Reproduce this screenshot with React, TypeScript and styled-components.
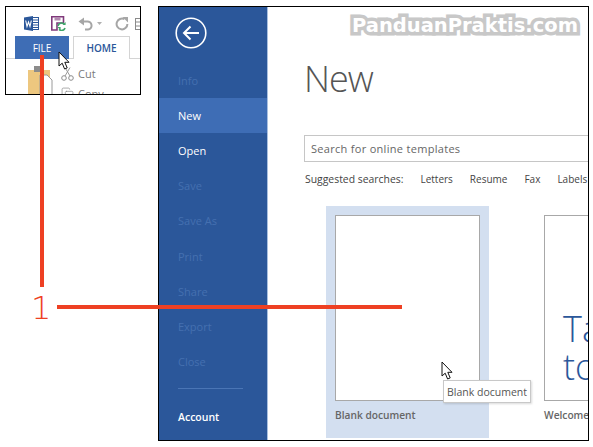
import React from 'react';
import styled, { createGlobalStyle } from 'styled-components';
import { Copy } from 'lucide-react';

const UI_FONT = '"Open Sans", "Noto Sans", sans-serif';

const GlobalStyle = createGlobalStyle`
  html, body {
    margin: 0;
    background: #ffffff;
  }
  #root {
    width: 593px;
    height: 447px;
  }
`;

function Arrow({ className }: { className?: string }) {
  return (
    <svg className={className} width='13' height='20' viewBox='0 0 13 20'>
      <path
        d='M1 1 L1 15 L4.2 12.2 L6.6 18 L9.2 16.9 L6.8 11.3 L11 11.3 Z'
        fill='#fff'
        stroke='#111'
        strokeWidth='1'
        strokeLinejoin='miter'
      />
    </svg>
  );
}

function WordIcon() {
  return (
    <svg width='15' height='15' viewBox='0 0 15 15'>
      <rect x='7' y='1.5' width='7.5' height='12' fill='#fff' stroke='#2b579a' />
      <path d='M9 4h5M9 6.5h5M9 9h5M9 11.5h5' stroke='#2b579a' />
      <path d='M0 1.6 L9 0 V15 L0 13.4 Z' fill='#2b579a' />
      <path d='M1.7 4.5 L3 10.5 L4.5 6 L6 10.5 L7.3 4.5' fill='none' stroke='#fff' strokeWidth='1.1' />
    </svg>
  );
}

function SaveIcon() {
  return (
    <svg width='15' height='15' viewBox='0 0 15 15'>
      <path d='M0.8 0.8 H12.5 V7 H6 V14 H0.8 Z' fill='#fff' stroke='#80397b' strokeWidth='1.6' />
      <rect x='3.5' y='1' width='6' height='3.5' fill='#b28ab0' />
      <path d='M7 10 A3.6 3.6 0 0 1 13 8' fill='none' stroke='#3fa66a' strokeWidth='1.7' />
      <path d='M14 12 A3.6 3.6 0 0 1 8 13.4' fill='none' stroke='#3fa66a' strokeWidth='1.7' />
      <path d='M11.5 9 H14.6 V6 Z M6.4 11 H9.6 V14.2 Z' fill='#3fa66a' />
    </svg>
  );
}

function UndoIcon() {
  return (
    <svg width='15' height='14' viewBox='0 0 15 14'>
      <path d='M2.5 4.5 H9 A4 4 0 0 1 10 12.6 H7' fill='none' stroke='#a6a6a6' strokeWidth='2' />
      <path d='M6 0.5 V8.5 L0.5 4.5 Z' fill='#a6a6a6' />
    </svg>
  );
}

function CaretIcon() {
  return (
    <svg width='5' height='3' viewBox='0 0 5 3'>
      <path d='M0 0 H5 L2.5 3 Z' fill='#b0b0b0' />
    </svg>
  );
}

function RedoIcon() {
  return (
    <svg width='14' height='14' viewBox='0 0 14 14'>
      <path d='M9.5 2.2 A5.4 5.4 0 1 0 12.4 7' fill='none' stroke='#a6a6a6' strokeWidth='2' />
      <path d='M7.5 0 H13 V5.5 Z' fill='#a6a6a6' />
    </svg>
  );
}

function ExtraIcon() {
  return (
    <svg width='6' height='12' viewBox='0 0 6 12'>
      <rect x='0.5' y='0.5' width='9' height='11' fill='none' stroke='#8a8a8a' />
      <path d='M0 4h6M0 8h6' stroke='#8a8a8a' />
    </svg>
  );
}

function ScissorsIcon() {
  return (
    <svg width='13' height='14' viewBox='0 0 13 14'>
      <circle cx='3' cy='11' r='2.3' fill='none' stroke='#8c8c8c' />
      <circle cx='10' cy='11' r='2.3' fill='none' stroke='#8c8c8c' />
      <path d='M4 9 L9 0.5 M9 9 L4 0.5' fill='none' stroke='#9a9a9a' />
    </svg>
  );
}

function PasteIcon() {
  return (
    <svg width='27' height='30' viewBox='0 0 27 30'>
      <rect x='1' y='4' width='22' height='26' fill='#edc77f' />
      <rect x='7' y='0' width='10' height='6' fill='#8c8c8c' />
      <path d='M13 9 H20 L25 14 V30 H13 Z' fill='#fff' stroke='#9a9a9a' />
    </svg>
  );
}

function BackIcon() {
  return (
    <svg width='32' height='32' viewBox='0 0 32 32'>
      <circle cx='16' cy='16' r='14.8' fill='none' stroke='#fff' strokeWidth='1.6' />
      <path d='M9 16 H24 M15.5 9.5 L9 16 L15.5 22.5' fill='none' stroke='#fff' strokeWidth='2' />
    </svg>
  );
}

const sideItems = [
  { label: 'Info', disabled: true },
  { label: 'New', active: true },
  { label: 'Open' },
  { label: 'Save', disabled: true },
  { label: 'Save As', disabled: true },
  { label: 'Print', disabled: true },
  { label: 'Share', disabled: true },
  { label: 'Export', disabled: true },
  { label: 'Close', disabled: true },
];

const suggestions = ['Letters', 'Resume', 'Fax', 'Labels'];

function App() {
  return (
    <Canvas>
      <GlobalStyle />

      <RibbonWindow>
        <QuickAccess>
          <WordIcon />
          <SaveIcon />
          <UndoGroup>
            <UndoIcon />
            <CaretIcon />
          </UndoGroup>
          <RedoIcon />
          <ExtraIcon />
        </QuickAccess>
        <Tabs>
          <FileTab>FILE</FileTab>
          <HomeTab>HOME</HomeTab>
        </Tabs>
        <Ribbon>
          <PasteIcon />
          <Commands>
            <Command>
              <ScissorsIcon />
              Cut
            </Command>
            <Command>
              <Copy size={13} strokeWidth={1.3} color='#8a8a8a' />
              Copy
            </Command>
          </Commands>
        </Ribbon>
      </RibbonWindow>

      <BackstageWindow>
        <Sidebar>
          <BackSlot>
            <BackIcon />
          </BackSlot>
          {sideItems.map((item) => (
            <SideItem key={item.label} $active={item.active} $disabled={item.disabled}>
              {item.label}
            </SideItem>
          ))}
          <SideDivider />
          <AccountItem>Account</AccountItem>
        </Sidebar>
        <Content>
          <Title>New</Title>
          <SearchBox>Search for online templates</SearchBox>
          <Suggested>
            <SuggestedLabel>Suggested searches:</SuggestedLabel>
            {suggestions.map((s) => (
              <span key={s}>{s}</span>
            ))}
          </Suggested>
          <Templates>
            <BlankTile>
              <Page />
              <TileLabel>Blank document</TileLabel>
            </BlankTile>
            <WelcomeTile>
              <WelcomePage>
                <WelcomeText>
                  Take a
                  <br />
                  tour
                </WelcomeText>
              </WelcomePage>
              <TileLabel>Welcome to Word</TileLabel>
            </WelcomeTile>
          </Templates>
        </Content>
      </BackstageWindow>

      <Watermark>PanduanPraktis.com</Watermark>
      <VerticalLine />
      <HorizontalLine />
      <CalloutNumber>1</CalloutNumber>
      <FileCursor />
      <DocCursor />
      <Tooltip>Blank document</Tooltip>
    </Canvas>
  );
}

const Canvas = styled.div`
  position: relative;
  width: 593px;
  height: 447px;
  overflow: hidden;
  background: #ffffff;
  font-family: ${UI_FONT};
`;

const RibbonWindow = styled.div`
  position: absolute;
  left: 5px;
  top: 6px;
  width: 136px;
  height: 89px;
  box-sizing: border-box;
  border: 1px solid #000;
  overflow: hidden;
  background: #fff;
`;

const QuickAccess = styled.div`
  display: flex;
  align-items: center;
  gap: 12px;
  height: 15px;
  padding: 9px 0 5px 18px;

  svg {
    flex: none;
  }

  & > svg:last-child {
    margin-left: -6px;
  }
`;

const UndoGroup = styled.div`
  display: flex;
  flex: none;
  align-items: center;
  gap: 4px;
  margin-right: 1px;
`;

const Tabs = styled.div`
  display: flex;
  align-items: stretch;
  height: 23px;
  padding-left: 9px;
  box-shadow: inset 0 -1px 0 #d4d4d4;
`;

const FileTab = styled.div`
  display: flex;
  align-items: center;
  justify-content: center;
  width: 54px;
  background: #3e6db5;
  color: #fff;
  font-size: 10px;
`;

const HomeTab = styled.div`
  display: flex;
  align-items: center;
  justify-content: center;
  box-sizing: border-box;
  width: 57px;
  margin-left: 4px;
  border: 1px solid #d4d4d4;
  border-bottom: 0;
  background: #fff;
  color: #2b579a;
  font-size: 10px;
  font-weight: 600;
`;

const Ribbon = styled.div`
  display: flex;
  gap: 7px;
  padding: 7px 0 0 21px;
`;

const Commands = styled.div`
  display: flex;
  flex-direction: column;
  gap: 5px;
`;

const Command = styled.div`
  display: flex;
  align-items: center;
  gap: 4px;
  height: 15px;
  color: #7a7a7a;
  font-size: 11px;
`;

const BackstageWindow = styled.div`
  position: absolute;
  left: 158px;
  top: 6px;
  display: flex;
  width: 431px;
  height: 435px;
  box-sizing: border-box;
  border: 1px solid #000;
  overflow: hidden;
  background: #fff;
`;

const Sidebar = styled.nav`
  display: flex;
  flex-direction: column;
  flex: 0 0 108px;
  border-right: 1px solid #a9c0e0;
  background: #2b579a;
`;

const BackSlot = styled.div`
  display: flex;
  align-items: center;
  box-sizing: border-box;
  height: 56px;
  padding: 0 0 4px 16px;
`;

const SideItem = styled.div<{ $active?: boolean; $disabled?: boolean }>`
  display: flex;
  align-items: center;
  height: 35.1px;
  flex: none;
  padding-left: 19px;
  font-size: 11px;
  background: ${(p) => (p.$active ? '#3e6db5' : 'transparent')};
  color: ${(p) => (p.$disabled ? '#4570b0' : '#ffffff')};
`;

const SideDivider = styled.div`
  height: 1px;
  margin: 9px 24px 0 19px;
  background: #4a75b5;
`;

const AccountItem = styled.div`
  margin: 21px 0 0 19px;
  color: #fff;
  font-size: 10.5px;
  font-weight: 600;
`;

const Content = styled.main`
  display: flex;
  flex-direction: column;
  flex: 1;
  min-width: 0;
`;

const Title = styled.h1`
  margin: 48px 0 0 36px;
  color: #555;
  font-size: 36px;
  font-weight: 300;
  letter-spacing: -1px;
  line-height: 48px;
`;

const SearchBox = styled.div`
  display: flex;
  align-items: center;
  box-sizing: border-box;
  height: 27px;
  margin: 32px -10px 0 36px;
  padding-left: 6px;
  border: 1px solid #c6c6c6;
  color: #666;
  font-size: 11px;
  letter-spacing: 0.3px;
`;

const Suggested = styled.div`
  display: flex;
  gap: 17px;
  margin: 9px -20px 0 37px;
  color: #444;
  font-size: 10px;
  line-height: 16px;
  white-space: nowrap;
`;

const SuggestedLabel = styled.span`
  font-size: 10.4px;
`;

const Templates = styled.div`
  display: flex;
  gap: 55px;
  margin: 19px 0 0 58px;
`;

const BlankTile = styled.div`
  flex: none;
  box-sizing: border-box;
  width: 163px;
  height: 232px;
  padding: 9px;
  background: #d3dff0;
`;

const WelcomeTile = styled.div`
  flex: none;
  box-sizing: border-box;
  width: 163px;
  padding-top: 9px;
`;

const Page = styled.div`
  box-sizing: border-box;
  width: 145px;
  height: 186px;
  border: 1px solid #a8a8a8;
  background: #fff;
`;

const WelcomePage = styled(Page)`
  display: flex;
  align-items: flex-end;
  overflow: hidden;
  padding: 0 0 14px 18px;
`;

const WelcomeText = styled.div`
  color: #2b579a;
  font-size: 36px;
  font-weight: 300;
  line-height: 38px;
  white-space: nowrap;
`;

const TileLabel = styled.div`
  margin-top: 7px;
  color: #666;
  font-size: 10.2px;
  font-weight: 600;
  white-space: nowrap;
`;

const Watermark = styled.div`
  position: absolute;
  left: 352px;
  top: 14px;
  color: #fff;
  font-family: 'DejaVu Sans', sans-serif;
  font-size: 19.5px;
  font-weight: 700;
  line-height: 24px;
  white-space: nowrap;
  -webkit-text-stroke: 7px #c8c8c8;
  paint-order: stroke fill;
`;

const VerticalLine = styled.div`
  position: absolute;
  left: 40px;
  top: 55px;
  width: 4px;
  height: 232px;
  background: #ee4023;
`;

const HorizontalLine = styled.div`
  position: absolute;
  left: 57px;
  top: 305px;
  width: 345px;
  height: 4px;
  background: #ee4023;
`;

const CalloutNumber = styled.div`
  position: absolute;
  left: 31px;
  top: 291px;
  color: #ee4023;
  font-family: 'DejaVu Sans', sans-serif;
  font-size: 32px;
  font-weight: 200;
  line-height: 34px;
`;

const FileCursor = styled(Arrow)`
  position: absolute;
  left: 58px;
  top: 51px;
`;

const DocCursor = styled(Arrow)`
  position: absolute;
  left: 441px;
  top: 361px;
`;

const Tooltip = styled.div`
  position: absolute;
  left: 443px;
  top: 380px;
  box-sizing: border-box;
  width: 88px;
  height: 23px;
  border: 1px solid #c8c8c8;
  background: #fff;
  box-shadow: 1px 1px 2px rgba(0, 0, 0, 0.15);
  color: #555;
  font-size: 10.5px;
  line-height: 22px;
  text-align: center;
  white-space: nowrap;
`;

export default App;
